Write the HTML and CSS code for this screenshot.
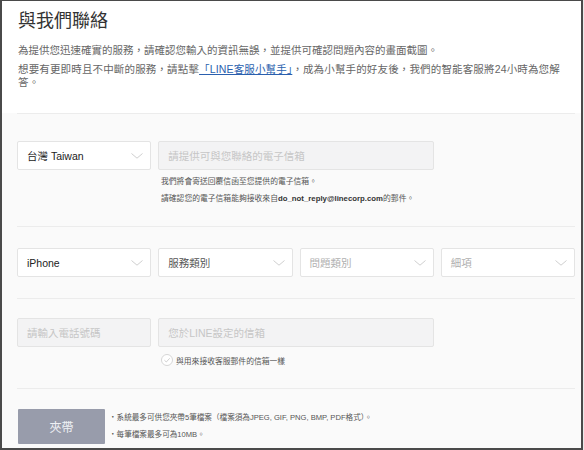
FILE: index.html
```html
<!DOCTYPE html>
<html lang="zh-Hant">
<head>
<meta charset="utf-8">
<title>與我們聯絡</title>
<link rel="stylesheet" href="styles.css">
</head>
<body>
<div class="frame">
  <header class="intro">
    <h1 class="title">與我們聯絡</h1>
    <p class="lead">為提供您迅速確實的服務，請確認您輸入的資訊無誤，並提供可確認問題內容的畫面截圖。</p>
    <p class="lead lead-2">想要有更即時且不中斷的服務，請點擊<a class="link" href="#">「LINE客服小幫手」</a>，成為小幫手的好友後，我們的智能客服將24小時為您解答。</p>
  </header>

  <section class="sec sec-email">
    <div class="row">
      <div class="select w1"><span class="val">台灣 Taiwan</span><svg class="chev" width="12" height="6" viewBox="0 0 12 6"><polyline points="0.5,0.5 6,5.2 11.5,0.5" fill="none" stroke="#cfcfcf" stroke-width="1"/></svg></div>
      <input class="field w2" type="text" placeholder="請提供可與您聯絡的電子信箱">
    </div>
    <p class="note">我們將會寄送回覆信函至您提供的電子信箱。<br>請確認您的電子信箱能夠接收來自<b>do_not_reply@linecorp.com</b>的郵件。</p>
  </section>

  <section class="sec sec-type">
    <div class="row">
      <div class="select w1"><span class="val">iPhone</span><svg class="chev" width="12" height="6" viewBox="0 0 12 6"><polyline points="0.5,0.5 6,5.2 11.5,0.5" fill="none" stroke="#cfcfcf" stroke-width="1"/></svg></div>
      <div class="select w1"><span class="val val-mid">服務類別</span><svg class="chev" width="12" height="6" viewBox="0 0 12 6"><polyline points="0.5,0.5 6,5.2 11.5,0.5" fill="none" stroke="#cfcfcf" stroke-width="1"/></svg></div>
      <div class="select w1"><span class="val val-off">問題類別</span><svg class="chev" width="12" height="6" viewBox="0 0 12 6"><polyline points="0.5,0.5 6,5.2 11.5,0.5" fill="none" stroke="#cfcfcf" stroke-width="1"/></svg></div>
      <div class="select w1"><span class="val val-off">細項</span><svg class="chev" width="12" height="6" viewBox="0 0 12 6"><polyline points="0.5,0.5 6,5.2 11.5,0.5" fill="none" stroke="#cfcfcf" stroke-width="1"/></svg></div>
    </div>
  </section>

  <section class="sec sec-phone">
    <div class="row">
      <input class="field w1" type="text" placeholder="請輸入電話號碼">
      <input class="field w2" type="text" placeholder="您於LINE設定的信箱">
    </div>
    <label class="same">
      <svg class="check" width="12" height="12" viewBox="0 0 12 12"><circle cx="6" cy="6" r="5.5" fill="#fff" stroke="#d6d6d6" stroke-width="1"/><polyline points="3.4,6.2 5.3,8 8.7,4.3" fill="none" stroke="#d0d0d0" stroke-width="1"/></svg>
      <span>與用來接收客服郵件的信箱一樣</span>
    </label>
  </section>

  <section class="sec sec-attach">
    <button class="attach" type="button">夾帶</button>
    <ul class="rules">
      <li>系統最多可供您夾帶5筆檔案（檔案須為JPEG, GIF, PNG, BMP, PDF格式）。</li>
      <li>每筆檔案最多可為10MB。</li>
    </ul>
  </section>
</div>
</body>
</html>
```

FILE: styles.css
```css
* { box-sizing: border-box; }

html, body {
  margin: 0;
  padding: 0;
  background: #e9e9e9;
}

body {
  font-family: "Liberation Sans", "Noto Sans CJK TC", sans-serif;
  color: #333;
}

.frame {
  width: 583px;
  height: 450px;
  border-top: 1px solid #4a4a4a;
  border-left: 2px solid #4a4a4a;
  border-right: 2px solid #4a4a4a;
  border-bottom: 2px solid #4a4a4a;
  background: #fafafa;
  overflow: hidden;
}

.intro {
  background: #fff;
  padding: 8px 10px 0 16px;
  height: 112px;
}

.title {
  margin: 0;
  font-size: 18px;
  line-height: 24px;
  font-weight: normal;
  color: #333;
}

.lead {
  margin: 11px 0 0;
  font-size: 10.5px;
  line-height: 13px;
  color: #666;
}

.lead-2 {
  margin-top: 6px;
  letter-spacing: 0.15px;
}

.link {
  color: #2a5fae;
  text-decoration: underline;
}

.sec {
  margin: 0 6px 0 15px;
  border-top: 1px solid #ececec;
}

.row {
  display: flex;
  gap: 7px;
}

.w1 { width: 134.25px; flex: 0 0 134.25px; }
.w2 { width: 275.5px; flex: 0 0 275.5px; }

.select {
  height: 29px;
  background: #fff;
  border: 1px solid #e4e4e4;
  border-radius: 2px;
  display: flex;
  align-items: center;
  justify-content: space-between;
  padding: 0 7px 0 9px;
}

.val {
  font-size: 10.5px;
  color: #222;
}

.val-mid { color: #555; }
.val-off { color: #b0b0b0; }

.chev { display: block; }

.field {
  height: 29px;
  margin: 0;
  background: #f3f3f4;
  border: 1px solid #e4e4e4;
  border-radius: 2px;
  padding: 0 9px;
  font: inherit;
  font-size: 10.5px;
  color: #333;
  outline: none;
}

.field::placeholder {
  color: #c6c6c6;
}

.sec-email {
  padding: 27px 0 19px;
}

.note {
  margin: 4px 0 0 144px;
  font-size: 7.8px;
  line-height: 16.6px;
  color: #555;
}

.note b {
  font-weight: bold;
  color: #333;
}

.sec-type {
  padding: 21px 0 21px;
}

.sec-phone {
  padding: 19px 0 22px;
}

.same {
  display: flex;
  align-items: center;
  gap: 3px;
  margin: 7px 0 0 144px;
  height: 12px;
  font-size: 7.8px;
  color: #555;
}

.check { display: block; }

.sec-attach {
  padding: 20px 0 0;
  display: flex;
  align-items: center;
  gap: 4px;
}

.attach {
  width: 87px;
  height: 35px;
  margin: 0 0 0 1px;
  border: 0;
  border-radius: 1px;
  background: #989cab;
  color: #eef0f4;
  font: inherit;
  font-size: 12px;
  font-weight: normal;
}

.rules {
  list-style: none;
  margin: 0;
  padding: 0;
  font-size: 7.6px;
  line-height: 16.6px;
  color: #555;
}

.rules li::before {
  content: "・";
}
```
